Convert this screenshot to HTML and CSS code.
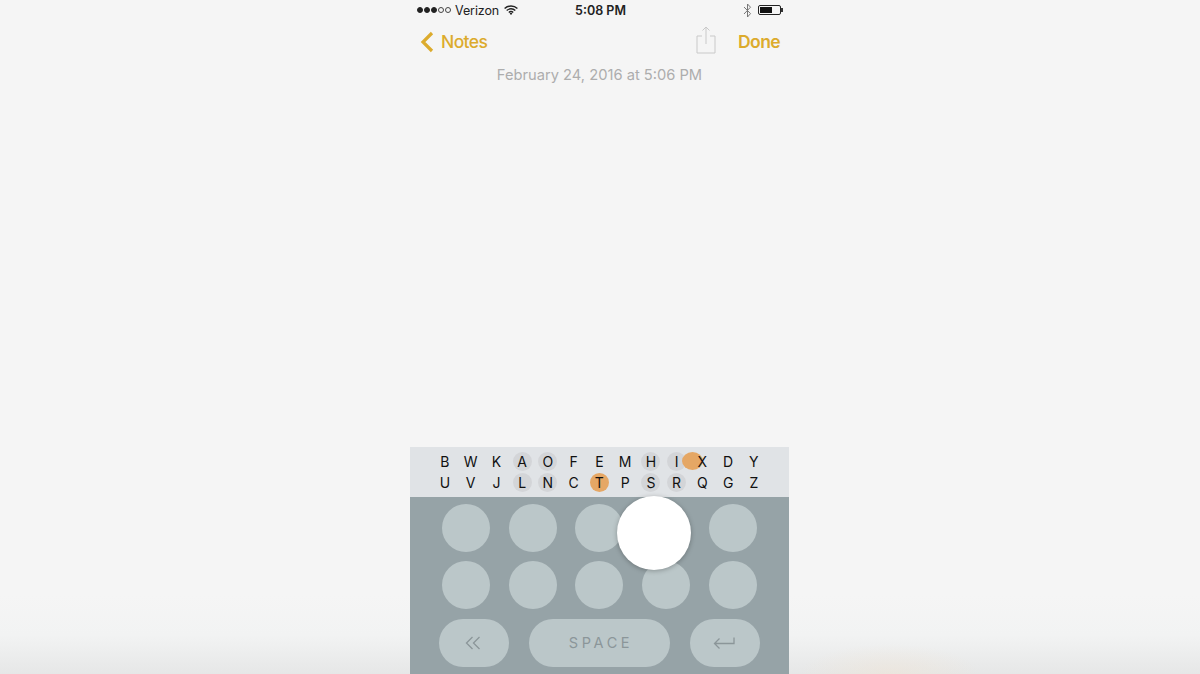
FILE: index.html
```html
<!DOCTYPE html>
<html lang="en">
<head>
<meta charset="utf-8">
<title>Notes</title>
<link rel="stylesheet" href="styles.css">
</head>
<body>
<main class="phone">
  <div class="status">
    <div class="status-left">
      <span class="signal"><i class="dot on"></i><i class="dot on"></i><i class="dot on"></i><i class="dot"></i><i class="dot"></i></span>
      <span class="carrier">Verizon</span>
      <svg class="wifi" viewBox="0 0 14 10" width="14" height="10"><path d="M.6 3.6a9 9 0 0 1 12.8 0M2.7 5.6a6 6 0 0 1 8.6 0M4.8 7.5a3 3 0 0 1 4.4 0" fill="none" stroke="#222" stroke-width="1.4"/><path d="M7 10 5.6 8.4a2 2 0 0 1 2.8 0z" fill="#222"/></svg>
    </div>
    <div class="time">5:08 PM</div>
    <div class="status-right">
      <svg class="bt" viewBox="0 0 9 15" width="9" height="15"><path d="M1 4l6.5 6.6L4.5 14V1l3 3.2L1 11" fill="none" stroke="#777" stroke-width="1"/></svg>
      <span class="battery"><span class="battery-fill"></span></span><span class="battery-tip"></span>
    </div>
  </div>
  <nav class="nav">
    <svg class="chevron" viewBox="0 0 14 22" width="14" height="22"><path d="M12 2 3 11l9 9" fill="none" stroke="#dcab2d" stroke-width="3.2"/></svg>
    <span class="back">Notes</span>
    <svg class="share" viewBox="0 0 20 28" width="20" height="28"><path d="M6 10H1v17h18V10h-5M10 18V1M6.5 4.5 10 1l3.5 3.5" fill="none" stroke="#c9c9c9" stroke-width="1"/></svg>
    <span class="done">Done</span>
  </nav>
  <div class="date">February 24, 2016 at 5:06 PM</div>
  <div class="note"></div>
  <section class="letters">
    <span>B</span><span>W</span><span>K</span><span class="hit">A</span><span class="hit">O</span><span>F</span><span>E</span><span>M</span><span class="hit">H</span><span class="hit">I</span><span class="x">X</span><span>D</span><span>Y</span>
    <span>U</span><span>V</span><span>J</span><span class="hit">L</span><span class="hit">N</span><span>C</span><span class="hot">T</span><span>P</span><span class="hit">S</span><span class="hit">R</span><span>Q</span><span>G</span><span>Z</span>
  </section>
  <section class="keyboard">
    <div class="keys">
      <i class="key"></i><i class="key"></i><i class="key"></i><i class="key"></i><i class="key"></i>
      <i class="key"></i><i class="key"></i><i class="key"></i><i class="key"></i><i class="key"></i>
    </div>
    <div class="actions">
      <div class="action side"><svg class="rewind" viewBox="0 0 16 14" width="16" height="14"><path d="M7.5 1 1.5 7l6 6M14.5 1l-6 6 6 6" fill="none" stroke="#8b9699" stroke-width="1.3"/></svg></div>
      <div class="action space">SPACE</div>
      <div class="action side"><svg class="enter" viewBox="0 0 22 14" width="22" height="14"><path d="M21 1.5v6H1.5M6.5 2.5l-5 5 5 5" fill="none" stroke="#8b9699" stroke-width="1.3"/></svg></div>
    </div>
    <div class="thumb"></div>
  </section>
</main>
</body>
</html>
```
FILE: styles.css
```css
* { box-sizing: border-box; }
html, body { margin: 0; height: 100%; }
body {
  width: 1200px;
  height: 674px;
  overflow: hidden;
  display: flex;
  justify-content: center;
  padding-right: 1px;
  font-family: Inter, "Liberation Sans", sans-serif;
  background:
    radial-gradient(ellipse 90px 30px at 890px 674px, rgba(240, 228, 212, .5), rgba(240, 228, 212, 0)),
    linear-gradient(to bottom, #f5f5f5 595px, #f2f3f3 635px, #e6e7e7 674px);
}
.phone {
  width: 379px;
  height: 674px;
  display: flex;
  flex-direction: column;
  background: #f5f5f5;
}
.status {
  height: 20px;
  display: grid;
  grid-template-columns: 1fr auto 1fr;
  align-items: center;
  padding: 0 6px 0 7px;
  font-size: 12.5px;
  color: #222;
}
.status-left, .status-right { display: flex; align-items: center; }
.status-right { justify-content: flex-end; }
.signal { display: flex; gap: 1px; margin-right: 4px; }
.dot { width: 6px; height: 6px; border-radius: 50%; border: 1px solid #444; }
.dot.on { background: #222; border-color: #222; }
.carrier { letter-spacing: -.1px; }
.wifi { margin-left: 5px; }
.time { font-weight: 600; margin-left: 1px; }
.bt { margin-right: 6px; }
.battery {
  width: 23px;
  height: 10px;
  border: 1px solid #222;
  border-radius: 2px;
  padding: 1px;
  display: flex;
}
.battery-fill { width: 12px; background: #111; }
.battery-tip { width: 2px; height: 4px; background: #333; }
.nav {
  height: 43px;
  display: flex;
  align-items: center;
  padding: 0 8px 0 10px;
  font-size: 17.5px;
  font-weight: 500;
  color: #dcab2d;
  letter-spacing: -.4px;
}
.chevron { margin: 1px 7px 0 0; }
.back { flex: 1; letter-spacing: -.6px; }
.share { margin: -3px 22px 0 0; }
.done { font-weight: 600; letter-spacing: -.6px; margin-right: 1px; }
.date {
  text-align: center;
  font-size: 14.7px;
  line-height: 18px;
  margin-top: 3px;
  color: #adadad;
}
.note { flex: 1; }
.letters {
  height: 50px;
  background: #e0e3e6;
  display: grid;
  grid-template-columns: repeat(13, 25.75px);
  grid-auto-rows: 21px;
  align-content: center;
  padding: 0 0 0 22px;
  position: relative;
  font-size: 14px;
  color: #111;
}
.letters span {
  display: flex;
  align-items: center;
  justify-content: center;
  position: relative;
  z-index: 0;
}
.hit::before, .hot::before, .x::before {
  content: "";
  position: absolute;
  z-index: -1;
  width: 19px;
  height: 19px;
  border-radius: 50%;
  background: #d3d5d8;
}
.hot::before { background: #e5a765; }
.x::before {
  width: 21px;
  height: 18px;
  left: -8px;
  top: 1px;
  background: #e5a765;
}
.keyboard {
  height: 177px;
  background: #96a3a7;
  position: relative;
  padding: 7px 0 0;
}
.keys {
  display: grid;
  grid-template-columns: repeat(5, 48px);
  grid-auto-rows: 48px;
  column-gap: 18.75px;
  row-gap: 9px;
  padding-left: 31.8px;
}
.key { border-radius: 50%; background: #bbc7c9; }
.actions {
  display: flex;
  gap: 20px;
  margin-top: 10px;
  padding-left: 29px;
}
.action {
  height: 48px;
  border-radius: 24px;
  background: #bbc7c9;
  display: flex;
  align-items: center;
  justify-content: center;
}
.side { width: 70px; }
.rewind { margin-right: 3px; }
.enter { margin-right: 2px; }
.space {
  width: 141px;
  font-size: 14.5px;
  letter-spacing: 3.6px;
  padding: 0 0 2px 3px;
  color: #8b9699;
}
.thumb {
  position: absolute;
  left: 207px;
  top: -1px;
  width: 74px;
  height: 74px;
  border-radius: 50%;
  background: #fff;
  box-shadow: 0 1px 5px rgba(0, 0, 0, .28);
}
```
